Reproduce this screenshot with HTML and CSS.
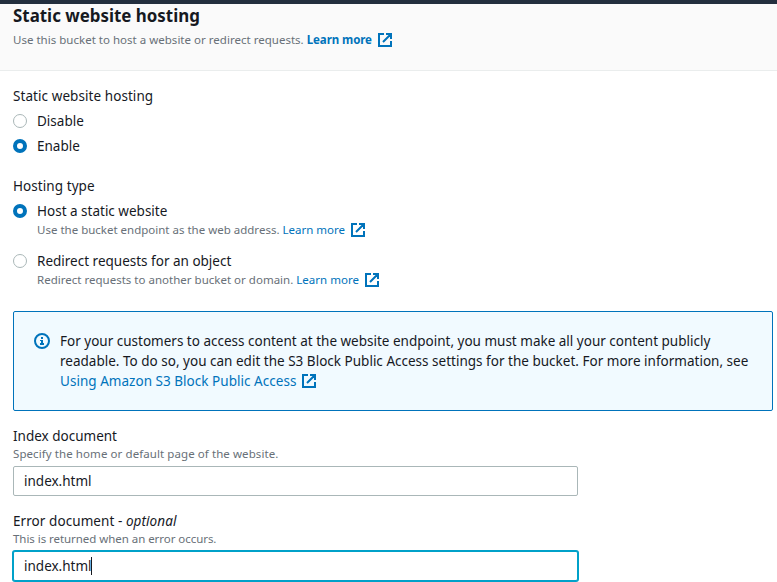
FILE: index.html
```
<!DOCTYPE html>
<html lang="en">
<head>
<meta charset="utf-8">
<title>Static website hosting</title>
<link rel="stylesheet" href="styles.css">
</head>
<body>
<svg class="defs" aria-hidden="true">
  <symbol id="external" viewBox="0 0 14 14">
    <path d="M6 1H1v12h12V8M8 1h5v5M12.500 1.500L5 9" fill="none" stroke="currentColor" stroke-width="2"/>
  </symbol>
</svg>
<header class="header">
  <h2 class="title">Static website hosting</h2>
  <p class="hint header-hint">Use this bucket to host a website or redirect requests. <a class="link strong">Learn more<svg class="ext"><use href="#external"/></svg></a></p>
</header>
<main class="content">
  <section class="group">
    <div class="label wide">Static website hosting</div>
    <label class="option"><span class="radio"></span><span>Disable</span></label>
    <label class="option"><span class="radio checked"></span><span>Enable</span></label>
  </section>
  <section class="group hosting">
    <div class="label wide">Hosting type</div>
    <div class="option"><span class="radio checked"></span><div>Host a static website
      <p class="hint host-hint">Use the bucket endpoint as the web address. <a class="link">Learn more<svg class="ext"><use href="#external"/></svg></a></p></div></div>
    <div class="option second"><span class="radio"></span><div>Redirect requests for an object
      <p class="hint redirect-hint">Redirect requests to another bucket or domain. <a class="link">Learn more<svg class="ext"><use href="#external"/></svg></a></p></div></div>
  </section>
  <aside class="alert">
    <svg class="info" viewBox="0 0 16 16"><circle cx="8" cy="8" r="7" fill="none" stroke="currentColor" stroke-width="2"/><path d="M7 4h2v2H7zM6 7h3v3h1v2H6v-2h1V8H6z" fill="currentColor"/></svg>
    <p class="alert-text">For your customers to access content at the website endpoint, you must make all your content publicly<br><span class="second-line">readable. To do so, you can edit the S3 Block Public Access settings for the bucket. For more information, see</span><br><a class="link using">Using Amazon S3 Block Public Access<svg class="ext"><use href="#external"/></svg></a></p>
  </aside>
  <section class="field">
    <div class="label">Index document</div>
    <p class="hint specify">Specify the home or default page of the website.</p>
    <div class="input">index.html</div>
  </section>
  <section class="field error-field">
    <div class="label wide">Error document - <em>optional</em></div>
    <p class="hint returned">This is returned when an error occurs.</p>
    <div class="input focused">index.html<span class="caret"></span></div>
  </section>
</main>
</body>
</html>
```
FILE: styles.css
```
* { box-sizing: border-box; }
html { overflow: hidden; }
body {
  margin: 0;
  height: 582px;
  overflow: hidden;
  background: #fff;
  color: #16191f;
  font: 13.5px/20px "Noto Sans", sans-serif;
  white-space: nowrap;
}
p, h2 { margin: 0; }
.defs { display: none; }
.header {
  height: 71px;
  padding: 2px 13px 0;
  border-top: 4px solid #232f3e;
  border-bottom: 1px solid #eaeded;
  background: #fafafa;
}
.title { font-size: 16.9px; line-height: 20px; font-weight: 700; }
.hint { font-size: 11.5px; line-height: 18px; color: #687078; }
.header-hint { margin-top: 5px; letter-spacing: .015px; }
.redirect-hint { letter-spacing: .01px; }
.link { color: #0073bb; }
.strong { font-weight: 700; letter-spacing: -.08px; }
.ext { width: 14px; height: 14px; margin-left: 6px; vertical-align: -3px; }
.content { padding: 15px 4px 0 13px; }
.label { height: 20px; }
.wide { letter-spacing: .07px; }
.option { display: flex; gap: 10px; margin-top: 5px; }
.radio {
  flex: none;
  width: 14px;
  height: 14px;
  margin-top: 3px;
  border: 1px solid #aab7b8;
  border-radius: 50%;
  background: #fff;
}
.radio.checked { border: 4px solid #0073bb; }
.hosting { margin-top: 20px; }
.second { margin-top: 12px; }
.alert {
  display: flex;
  gap: 10px;
  height: 100px;
  margin-top: 22px;
  padding: 19px 20px;
  border: 1px solid #0073bb;
  border-radius: 2px;
  background: #f1faff;
}
.info { flex: none; width: 16px; height: 16px; margin-top: 2px; color: #0073bb; }
.second-line { letter-spacing: .01px; }
.using { letter-spacing: .03px; }
.using .ext { margin-left: 6px; vertical-align: -2px; }
.field { width: 565px; margin-top: 15px; }
.specify { letter-spacing: .08px; }
.returned { letter-spacing: -.05px; }
.field .hint { height: 20px; line-height: 16px; }
.input {
  display: flex;
  align-items: center;
  height: 30px;
  padding: 0 10px;
  border: 1px solid #aab7b8;
  border-radius: 2px;
  background: #fff;
}
.focused { border-color: #00a1c9; box-shadow: 0 0 0 1px #00a1c9; }
.caret { width: 1px; height: 18px; margin-left: -1px; background: #16191f; }
```
